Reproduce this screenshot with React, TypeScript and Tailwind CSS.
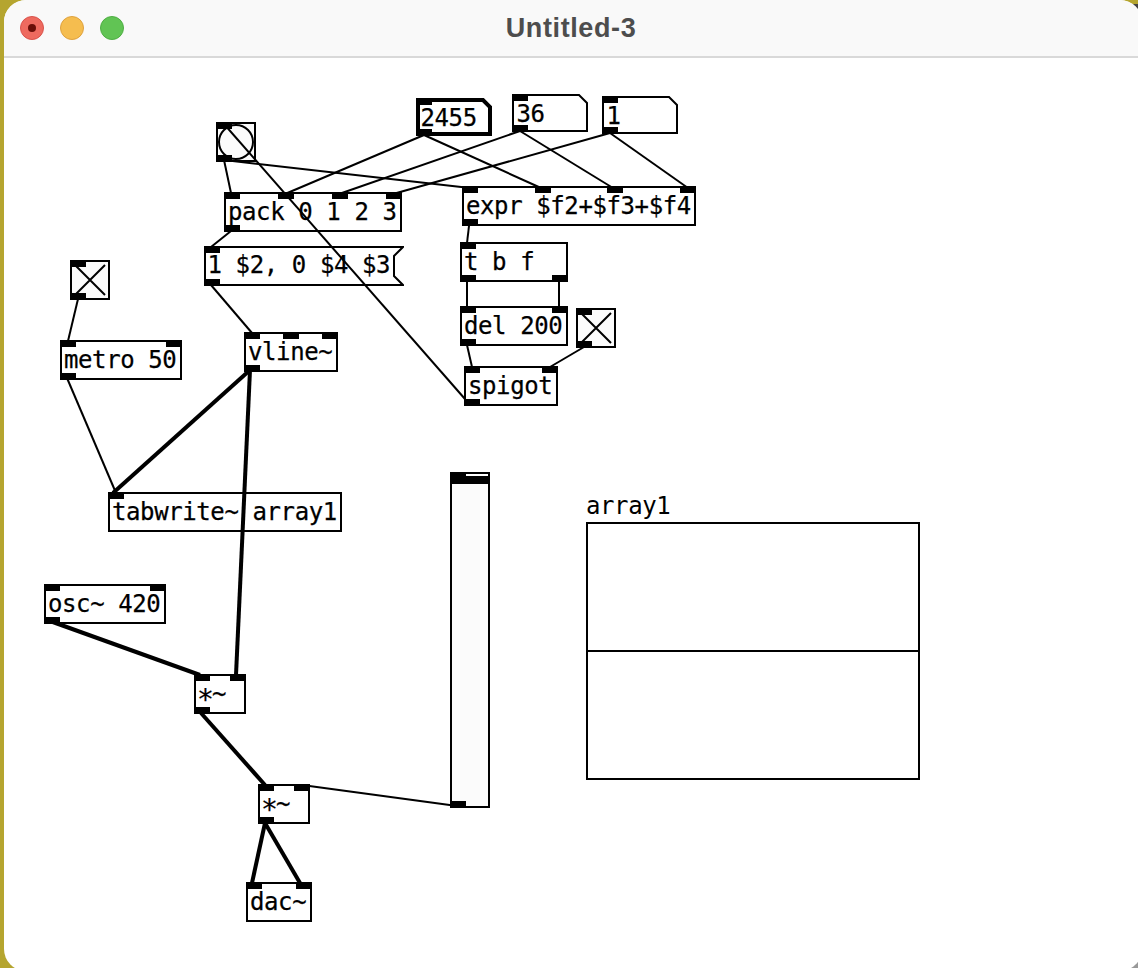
// Pure Data patch window, nodes sit on a free canvas so they are placed from data
type Patch = {
  label?: string;
  x: number;
  y: number;
  w: number;
  h: number;
  ins?: number;
  outs?: number;
  kind?: 'obj' | 'msg' | 'num' | 'bang' | 'toggle';
  thick?: boolean;
};

const patches: Patch[] = [
  { kind: 'bang', x: 216, y: 122, w: 40, h: 40, ins: 1, outs: 1 },
  { label: 'pack 0 1 2 3', x: 224, y: 192, w: 178, h: 40, ins: 4, outs: 1 },
  { label: '1 $2, 0 $4 $3', kind: 'msg', x: 204, y: 246, w: 200, h: 40, ins: 1, outs: 1 },
  { label: '2455', kind: 'num', thick: true, x: 416, y: 98, w: 76, h: 38, ins: 1, outs: 1 },
  { label: '36', kind: 'num', x: 512, y: 94, w: 76, h: 38, ins: 1, outs: 1 },
  { label: '1', kind: 'num', x: 602, y: 96, w: 76, h: 38, ins: 1, outs: 1 },
  { label: 'expr $f2+$f3+$f4', x: 462, y: 186, w: 234, h: 40, ins: 4, outs: 1 },
  { label: 't b f', x: 460, y: 242, w: 108, h: 40, ins: 1, outs: 2 },
  { label: 'del 200', x: 460, y: 306, w: 108, h: 40, ins: 2, outs: 1 },
  { kind: 'toggle', x: 576, y: 308, w: 40, h: 40, ins: 1, outs: 1 },
  { label: 'spigot', x: 464, y: 366, w: 94, h: 40, ins: 2, outs: 1 },
  { kind: 'toggle', x: 70, y: 260, w: 40, h: 40, ins: 1, outs: 1 },
  { label: 'metro 50', x: 60, y: 340, w: 122, h: 40, ins: 2, outs: 1 },
  { label: 'vline~', x: 244, y: 332, w: 94, h: 40, ins: 3, outs: 1 },
  { label: 'tabwrite~ array1', x: 108, y: 492, w: 234, h: 40, ins: 1, outs: 0 },
  { label: 'osc~ 420', x: 44, y: 584, w: 122, h: 40, ins: 2, outs: 1 },
  { label: '*~', x: 194, y: 674, w: 52, h: 40, ins: 2, outs: 1 },
  { label: '*~', x: 258, y: 784, w: 52, h: 40, ins: 2, outs: 1 },
  { label: 'dac~', x: 246, y: 882, w: 66, h: 40, ins: 2, outs: 0 },
];

const thinWires = [
  [224, 160, 231, 193],
  [224, 160, 470, 188],
  [224, 124, 465, 399],
  [424, 135, 285, 194],
  [424, 135, 541, 188],
  [520, 131, 339, 194],
  [520, 131, 613, 188],
  [610, 133, 393, 194],
  [610, 133, 688, 188],
  [231, 231, 211, 247],
  [211, 285, 252, 333],
  [469, 226, 467, 243],
  [467, 280, 467, 307],
  [559, 280, 559, 307],
  [467, 345, 472, 367],
  [584, 347, 550, 367],
  [78, 299, 68, 341],
  [67, 378, 116, 493],
  [302, 785, 457, 806],
];

const thickWires = [
  [250, 370, 113, 493],
  [250, 370, 236, 675],
  [50, 621, 200, 675],
  [201, 713, 265, 785],
  [265, 823, 252, 883],
  [265, 823, 300, 883],
];

function Wires({ list, width }: { list: number[][]; width: number }) {
  return (
    <>
      {list.map((l, i) => (
        <line key={i} x1={l[0]} y1={l[1]} x2={l[2]} y2={l[3]} stroke="#000" strokeWidth={width} />
      ))}
    </>
  );
}

function Ports({ n, w, bottom }: { n: number; w: number; bottom?: boolean }) {
  return (
    <>
      {Array.from({ length: n }).map((_, i) => (
        <span
          key={i}
          className={bottom ? 'absolute bottom-0 h-[7px] w-4 bg-black' : 'absolute top-0 h-[7px] w-4 bg-black'}
          style={{ left: n > 1 ? ((w - 16) * i) / (n - 1) : 0 }}
        />
      ))}
    </>
  );
}

function PatchBox({ p }: { p: Patch }) {
  const kind = p.kind ?? 'obj';
  const { w, h } = p;
  const sw = p.thick ? 4 : 2;
  const o = sw / 2;
  let outline = '';
  if (kind === 'msg') {
    outline = `1,1 ${w - 1},1 ${w - 10},10 ${w - 10},${h - 10} ${w - 1},${h - 1} 1,${h - 1}`;
  } else if (kind === 'num') {
    outline = `${o},${o} ${w - 9},${o} ${w - o},9 ${w - o},${h - o} ${o},${h - o}`;
  }

  let textClass = 'absolute left-[2px] top-0 whitespace-pre font-["DejaVu_Sans_Mono",monospace] text-[24px] leading-[36px] tracking-[-0.4px] text-black [-webkit-text-stroke:0.25px_black]';
  if (kind === 'msg') {
    textClass = 'absolute left-[3.5px] top-0 whitespace-pre font-["DejaVu_Sans_Mono",monospace] text-[24px] leading-[38px] tracking-[-0.4px] text-black [-webkit-text-stroke:0.25px_black]';
  } else if (kind === 'num') {
    textClass = 'absolute left-[4.5px] top-[1px] whitespace-pre font-["DejaVu_Sans_Mono",monospace] text-[24px] leading-[38px] tracking-[-0.4px] text-black [-webkit-text-stroke:0.25px_black]';
  }

  return (
    <div
      className={
        kind === 'obj'
          ? 'absolute box-border border-2 border-black bg-white'
          : kind === 'bang' || kind === 'toggle'
            ? 'absolute box-border border-2 border-black bg-[#fbfbfb]'
            : 'absolute box-border'
      }
      style={{ left: p.x, top: p.y, width: w, height: h }}
    >
      {outline && (
        <svg className="absolute left-0 top-0" width={w} height={h}>
          <polygon points={outline} fill="#fff" stroke="#000" strokeWidth={sw} />
        </svg>
      )}
      {kind === 'bang' && (
        <svg className="absolute left-[-2px] top-[-2px]" width={w} height={h}>
          <circle cx="20" cy="20" r="17" fill="#fbfbfb" stroke="#000" strokeWidth="2" />
        </svg>
      )}
      {kind === 'toggle' && (
        <svg className="absolute left-[-2px] top-[-2px]" width={w} height={h}>
          <path d="M5 5L35 35M35 5L5 35" stroke="#000" strokeWidth="2" fill="none" />
        </svg>
      )}
      {p.label && (
        <span className={textClass}>
          {p.label === '*~' ? (
            <>
              <span className="relative left-[-1px] top-[7px] inline-block w-[14px] text-[28px] leading-none">*</span>~
            </>
          ) : (
            p.label
          )}
        </span>
      )}
      <div className={kind === 'obj' || kind === 'bang' || kind === 'toggle' ? 'absolute left-[-2px] top-[-2px]' : 'absolute left-0 top-0'} style={{ width: w, height: h }}>
        <Ports n={p.ins ?? 0} w={w} />
        <Ports n={p.outs ?? 0} w={w} bottom />
      </div>
    </div>
  );
}

export default function App() {
  return (
    <div className="relative h-[968px] w-[1138px] overflow-hidden bg-[#b5a52f]">
      {/* desktop showing through the window corners on the right */}
      <div className="absolute right-0 top-[4px] h-6 w-6 bg-[#444444]" />
      <div className="absolute bottom-0 right-0 h-6 w-6 bg-[#999999]" />

      <div className="relative ml-[4px] flex h-[971px] w-[1138px] flex-col overflow-hidden rounded-[22px] bg-white">
        <div className="relative flex h-[58px] shrink-0 items-center justify-center border-b-2 border-[#d9d9d9] bg-[#f9f9f9]">
          <div className="absolute left-[16px] top-[16px] flex gap-4">
            <div className="flex h-6 w-6 items-center justify-center rounded-full border border-[#d9534c] bg-[#ee6a5f]">
              <div className="h-2 w-2 rounded-full bg-[#6b0e08]" />
            </div>
            <div className="h-6 w-6 rounded-full border border-[#dea23f] bg-[#f5bd4f]" />
            <div className="h-6 w-6 rounded-full border border-[#4fae44] bg-[#61c454]" />
          </div>
          <span className='mr-[4px] font-["Liberation_Sans",sans-serif] text-[27px] font-bold tracking-[0.6px] text-[#4d4d4d]'>
            Untitled-3
          </span>
        </div>
      </div>

      {patches.map((p, i) => (
        <PatchBox key={i} p={p} />
      ))}

      {/* vertical slider */}
      <div className="absolute left-[450px] top-[472px] box-border h-[336px] w-10 border-2 border-black bg-[#fbfbfb]">
        <div className="absolute left-[-2px] top-[-2px] h-[12px] w-10 bg-black">
          <div className="absolute left-[16px] top-[2px] h-[2px] w-[22px] bg-white" />
        </div>
        <div className="absolute bottom-[-2px] left-[-2px] h-[7px] w-4 bg-black" />
      </div>

      {/* array */}
      <span className='absolute left-[586px] top-[490px] font-["DejaVu_Sans_Mono",monospace] text-[24px] leading-[32px] tracking-[-0.4px] text-black'>
        array1
      </span>
      <div className="absolute left-[586px] top-[522px] box-border flex h-[258px] w-[334px] flex-col justify-center border-2 border-black bg-white">
        <div className="h-[2px] w-full bg-black" />
      </div>

      <svg className="pointer-events-none absolute left-0 top-0" width="1138" height="968">
        <Wires list={thinWires} width={2} />
        <Wires list={thickWires} width={4} />
      </svg>
    </div>
  );
}
